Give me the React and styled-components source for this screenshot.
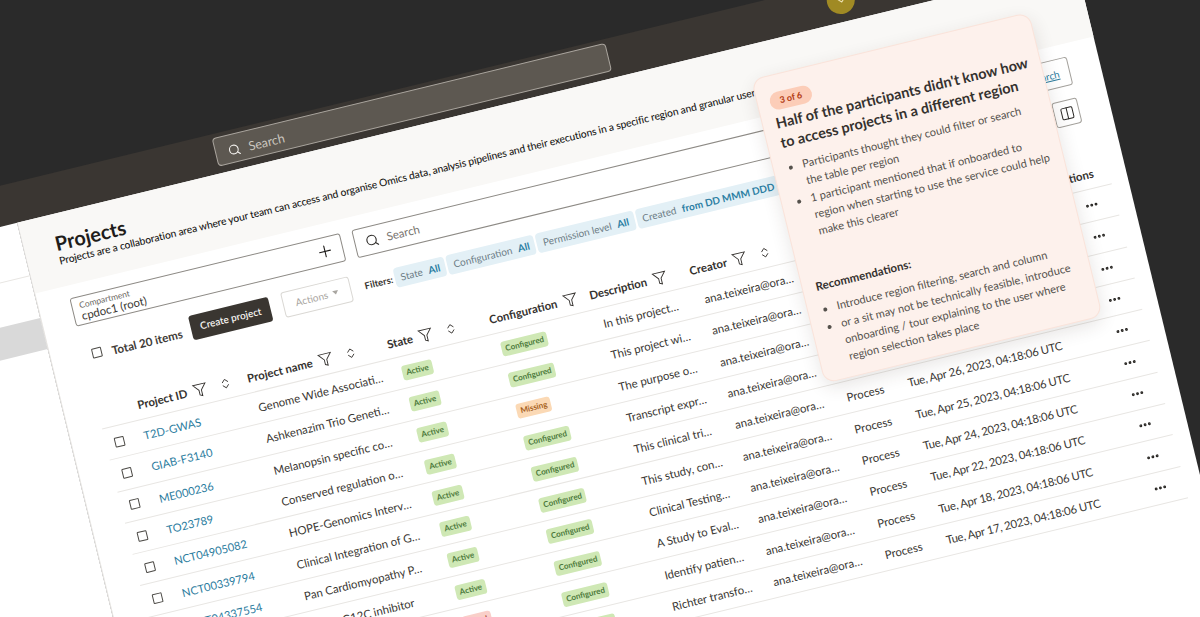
import React from 'react';
import styled, { createGlobalStyle } from 'styled-components';
import { Search, Plus, ChevronsUpDown, ChevronDown, Columns2, MoreHorizontal } from 'lucide-react';

const GlobalStyle = createGlobalStyle`
  html, body { margin: 0; padding: 0; background: #2a2a2a; overflow: hidden; }
  * { box-sizing: border-box; }
`;

const Stage = styled.div`
  width: 1200px;
  height: 617px;
  overflow: hidden;
  background: #2a2a2a;
  font-family: 'Lato', 'Noto Sans', sans-serif;
  color: #3a3733;
`;

// the whole screen is tilted, everything inside flows normally
const Device = styled.div`
  width: 1355px;
  height: 900px;
  transform-origin: 0 0;
  transform: rotate(-13.65deg) translate(-301px, 180.5px);
  display: flex;
  flex-direction: column;
`;

const TopBar = styled.div`
  height: 40px;
  flex: none;
  background: #3a3632;
  padding: 4px 0 0 474px;
  display: flex;
  align-items: flex-start;
`;

const TopSearch = styled.div`
  width: 405px;
  height: 29px;
  background: #5d5851;
  border: 1px solid #aaa59e;
  border-radius: 4px;
  display: flex;
  align-items: center;
  gap: 8px;
  padding: 3px 0 0 12px;
  color: #cbc6bf;
  font-size: 12.5px;
  svg { color: #f4f2ef; }
`;

const Avatar = styled.div`
  width: 28px;
  height: 28px;
  margin-left: 225px;
  border-radius: 50%;
  background: #a08a24;
  color: #eee3b4;
  display: flex;
  align-items: center;
  justify-content: center;
`;

const UserName = styled.span`
  margin: 7px 0 0 6px;
  color: #fff;
  font-size: 11px;
`;

const Body = styled.div`
  flex: 1;
  display: flex;
  min-height: 0;
`;

const Sidebar = styled.nav`
  width: 265px;
  flex: none;
  background: #fff;
  padding-top: 54px;
`;

const NavLine = styled.div`
  height: 1px;
  background: #e8e6e3;
  margin-bottom: 43px;
`;

const NavItem = styled.div`
  height: 32px;
  background: #d9d9d9;
`;

const Main = styled.main`
  position: relative;
  width: 1090px;
  flex: none;
  background: #fff;
  border-left: 1px solid #e6e4e1;
`;

const PageHead = styled.header`
  height: 73px;
  background: #f9f8f6;
  padding: 17px 0 0 31px;
  white-space: nowrap;
  overflow: hidden;
`;

const Title = styled.h1`
  margin: 0;
  font-size: 20px;
  line-height: 24px;
  font-weight: 700;
  color: #1f1d1b;
`;

const Subtitle = styled.p`
  margin: -1px 0 0;
  font-size: 10.35px;
  letter-spacing: -0.12px;
  line-height: 15px;
  font-weight: 500;
  color: #1a1917;
`;

const Toolbar = styled.div`
  display: grid;
  grid-template-columns: 278px 1fr;
  column-gap: 12px;
  row-gap: 15px;
  padding: 13px 31px 0 32px;
`;

const Field = styled.div`
  height: 29px;
  border: 1px solid #8d8a85;
  border-radius: 3px;
  background: #fff;
  display: flex;
  align-items: center;
  position: relative;
`;

const CompartmentField = styled(Field)`
  padding: 0 8px 0 7px;
  justify-content: space-between;
`;

const FieldText = styled.div`
  display: flex;
  flex-direction: column;
  font-size: 11.4px;
  line-height: 12px;
`;

const FieldLabel = styled.span`
  font-size: 8.5px;
  line-height: 10px;
  color: #6b6863;
`;

const SearchRow = styled.div`
  display: flex;
  gap: 8px;
`;

const SearchField = styled(Field)`
  flex: 1;
  gap: 8px;
  padding-left: 10px;
  color: #77736e;
  font-size: 11.4px;
  svg { color: #2f2d2a; }
`;

const OutlineButton = styled.button`
  height: 29px;
  padding: 0 10px;
  background: #fff;
  border: 1px solid #a3a09b;
  border-radius: 3px;
  font: inherit;
  font-size: 10px;
  color: #2b7c9e;
  text-decoration: underline;
`;

const ActionsRow = styled.div`
  display: flex;
  align-items: center;
  height: 26px;
  padding-left: 9px;
`;

const Checkbox = styled.span`
  display: block;
  flex: none;
  width: 10px;
  height: 10px;
  border: 1px solid #4b4945;
  border-radius: 1px;
`;

const SelectAll = styled(Checkbox)`
  margin-top: 3px;
`;

const Total = styled.span`
  margin: 6px 0 0 10px;
  width: 82px;
  font-size: 11.6px;
  font-weight: 700;
  white-space: nowrap;
  color: #3f3c38;
`;

const PrimaryButton = styled.button`
  width: 82px;
  height: 25px;
  border: 0;
  border-radius: 3px;
  background: #3a3631;
  color: #f5f3f0;
  font: inherit;
  font-size: 10px;
  font-weight: 600;
`;

const GhostButton = styled.button`
  width: 70px;
  height: 26px;
  margin-left: 13px;
  background: #fff;
  border: 1px solid #dad8d4;
  border-radius: 3px;
  font: inherit;
  font-size: 10px;
  color: #a9a6a1;
  display: flex;
  align-items: center;
  justify-content: center;
  gap: 5px;
`;

const Caret = styled.span`
  border-left: 3px solid transparent;
  border-right: 3px solid transparent;
  border-top: 4px solid #a9a6a1;
`;

const FilterRow = styled.div`
  display: flex;
  align-items: center;
  height: 26px;
  white-space: nowrap;
`;

const FilterLabel = styled.span`
  width: 31px;
  font-size: 9.5px;
  font-weight: 700;
`;

const Chip = styled.span`
  height: 20px;
  margin-right: 2px;
  padding: 0 6px;
  border-radius: 4px;
  background: #e3f0f6;
  display: flex;
  align-items: center;
  gap: 6px;
  font-size: 10px;
  color: #6d7d86;
  b { color: #2b7ea3; font-weight: 700; }
`;

const IconButton = styled.button`
  position: absolute;
  right: 31px;
  top: 128px;
  width: 26px;
  height: 26px;
  padding: 0;
  background: #fff;
  border: 1px solid #a3a09b;
  border-radius: 3px;
  color: #2b2926;
  display: flex;
  align-items: center;
  justify-content: center;
`;

const Table = styled.div`
  width: 1039px;
  margin: 32px 0 0 33px;
`;

const HeadRow = styled.div`
  display: grid;
  grid-template-columns: 40px 113px 144px 105px 103px 103px 123px 63px 191px 54px;
  height: 33px;
  padding-top: 3px;
  align-items: center;
  border-bottom: 1px solid #e8e6e3;
`;

const HeadCell = styled.div`
  display: flex;
  align-items: center;
  font-size: 11.4px;
  font-weight: 700;
  color: #35322f;
  white-space: nowrap;
`;

const Funnel = styled.svg`
  width: 15px;
  height: 15px;
  margin-left: 6px;
  fill: none;
  stroke: #35322f;
  stroke-width: 1.5;
  flex: none;
`;

const SortIcon = styled(ChevronsUpDown)`
  margin-left: 12px;
  flex: none;
`;

const Row = styled.div`
  display: grid;
  grid-template-columns: 39px 118px 148px 102px 105px 104px 115px 63px 208px 37px;
  height: 32.3px;
  align-items: center;
  border-bottom: 1px solid #e8e6e3;
  font-size: 11.4px;
  white-space: nowrap;
`;

const CheckCell = styled.div`
  padding-left: 9px;
`;

const IdLink = styled.a`
  color: #2b7c9e;
  font-size: 11.2px;
`;

const DateCell = styled.div`
  letter-spacing: -0.22px;
`;

const Badge = styled.span`
  display: inline-block;
  height: 15px;
  padding: 0 4px;
  border-radius: 3px;
  font-size: 8px;
  line-height: 15px;
  font-weight: 700;
  background: ${({ $tone }) => ({ good: '#cfe8b5', warn: '#fbd9b5', bad: '#f9cfc9' }[$tone])};
  color: ${({ $tone }) => ({ good: '#4d7a3c', warn: '#a65f1c', bad: '#a8392b' }[$tone])};
`;

const DotsCell = styled.div`
  display: flex;
  padding-left: 5px;
  color: #2b2926;
`;

const InsightCard = styled.aside`
  position: absolute;
  left: 746px;
  top: 34px;
  width: 286px;
  height: 313px;
  padding: 13px 10px 13px 12px;
  background: #fdf1ec;
  border: 1px solid #fae3da;
  border-radius: 12px;
  box-shadow: 0 6px 18px rgba(60, 40, 30, 0.12);
`;

const StepPill = styled.span`
  display: inline-block;
  height: 18px;
  padding: 0 10px;
  border-radius: 9px;
  background: #fccdb8;
  color: #b23a12;
  font-size: 9px;
  line-height: 18px;
  font-weight: 700;
`;

const CardTitle = styled.h2`
  margin: 3px 0 6px 1px;
  font-size: 14.5px;
  line-height: 20px;
  font-weight: 700;
  color: #35322f;
`;

const Bullets = styled.ul`
  margin: 0;
  padding: 0 0 0 17px;
  font-size: 11.1px;
  line-height: 17.3px;
  color: #55514c;
`;

const CardSub = styled.h3`
  margin: 38px 0 6px 1px;
  font-size: 11.5px;
  line-height: 16px;
  font-weight: 700;
  color: #35322f;
`;

const FilterIcon = () => (
  <Funnel viewBox="0 0 24 24">
    <polygon points="22 3 2 3 10 12.5 10 20 14 22 14 12.5 22 3" />
  </Funnel>
);

const columns = [
  ['', 0],
  ['Project ID', 1],
  ['Project name', 1],
  ['State', 1],
  ['Configuration', 0],
  ['Description', 0],
  ['Creator', 1],
  ['Type', 0],
  ['Created', 0],
];

const projects = [
  ['T2D-GWAS', 'Genome Wide Associati…', 'Active', 'Configured', 'In this project…', 'Tue, Apr 30, 2023, 04:18:06 UTC'],
  ['GIAB-F3140', 'Ashkenazim Trio Geneti…', 'Active', 'Configured', 'This project wi…', 'Tue, Apr 29, 2023, 04:18:06 UTC'],
  ['ME000236', 'Melanopsin specific co…', 'Active', 'Missing', 'The purpose o…', 'Tue, Apr 28, 2023, 04:18:06 UTC'],
  ['TO23789', 'Conserved regulation o…', 'Active', 'Configured', 'Transcript expr…', 'Tue, Apr 27, 2023, 04:18:06 UTC'],
  ['NCT04905082', 'HOPE-Genomics Interv…', 'Active', 'Configured', 'This clinical tri…', 'Tue, Apr 26, 2023, 04:18:06 UTC'],
  ['NCT00339794', 'Clinical Integration of G…', 'Active', 'Configured', 'This study, con…', 'Tue, Apr 25, 2023, 04:18:06 UTC'],
  ['NCT04337554', 'Pan Cardiomyopathy P…', 'Active', 'Configured', 'Clinical Testing…', 'Tue, Apr 24, 2023, 04:18:06 UTC'],
  ['NCT05132075', 'KRAS G12C inhibitor', 'Active', 'Configured', 'A Study to Eval…', 'Tue, Apr 22, 2023, 04:18:06 UTC'],
  ['NCT03892018', 'Lung Cancer Screening', 'Failed', 'Configured', 'Identify patien…', 'Tue, Apr 18, 2023, 04:18:06 UTC'],
  ['NCT02846623', 'Richter Syndrome', 'Failed', 'Configured', 'Richter transfo…', 'Tue, Apr 17, 2023, 04:18:06 UTC'],
];

const stateTone = { Active: 'good', Failed: 'bad' };
const configTone = { Configured: 'good', Missing: 'warn' };

export default function App() {
  return (
    <Stage>
      <GlobalStyle />
      <Device>
        <TopBar>
          <TopSearch>
            <Search size={13} strokeWidth={2} />
            Search
          </TopSearch>
          <Avatar>
            <ChevronDown size={13} />
          </Avatar>
          <UserName>Ana</UserName>
        </TopBar>
        <Body>
          <Sidebar>
            <NavLine />
            <NavItem />
          </Sidebar>
          <Main>
            <PageHead>
              <Title>Projects</Title>
              <Subtitle>
                Projects are a collaboration area where your team can access and organise Omics data, analysis pipelines and their executions in a specific region and granular user permissions
              </Subtitle>
            </PageHead>
            <Toolbar>
              <CompartmentField>
                <FieldText>
                  <FieldLabel>Compartment</FieldLabel>
                  cpdoc1 (root)
                </FieldText>
                <Plus size={19} strokeWidth={1.4} color="#1f1d1b" />
              </CompartmentField>
              <SearchRow>
                <SearchField>
                  <Search size={14} strokeWidth={2} />
                  Search
                </SearchField>
                <OutlineButton>Advanced search</OutlineButton>
              </SearchRow>
              <ActionsRow>
                <SelectAll />
                <Total>Total 20 items</Total>
                <PrimaryButton>Create project</PrimaryButton>
                <GhostButton>
                  Actions <Caret />
                </GhostButton>
              </ActionsRow>
              <FilterRow>
                <FilterLabel>Filters:</FilterLabel>
                <Chip>State <b>All</b></Chip>
                <Chip>Configuration <b>All</b></Chip>
                <Chip>Permission level <b>All</b></Chip>
                <Chip>Created <b>from DD MMM DDD - from DD MMM DDD</b></Chip>
              </FilterRow>
            </Toolbar>
            <IconButton>
              <Columns2 size={15} strokeWidth={1.6} />
            </IconButton>
            <Table>
              <HeadRow>
                {columns.map(([label, sortable], i) => (
                  <HeadCell key={i}>
                    {label}
                    {label && <FilterIcon />}
                    {sortable ? <SortIcon size={13} strokeWidth={1.6} /> : null}
                  </HeadCell>
                ))}
                <HeadCell>Actions</HeadCell>
              </HeadRow>
              {projects.map(([id, name, state, config, desc, date]) => (
                <Row key={id}>
                  <CheckCell><Checkbox /></CheckCell>
                  <IdLink>{id}</IdLink>
                  <div>{name}</div>
                  <div><Badge $tone={stateTone[state]}>{state}</Badge></div>
                  <div><Badge $tone={configTone[config]}>{config}</Badge></div>
                  <div>{desc}</div>
                  <div>ana.teixeira@ora…</div>
                  <div>Process</div>
                  <DateCell>{date}</DateCell>
                  <DotsCell><MoreHorizontal size={15} strokeWidth={2.6} /></DotsCell>
                </Row>
              ))}
            </Table>
            <InsightCard>
              <StepPill>3 of 6</StepPill>
              <CardTitle>Half of the participants didn't know how to access projects in a different region</CardTitle>
              <Bullets>
                <li>Participants thought they could filter or search<br />the table per region</li>
                <li>1 participant mentioned that if onboarded to region when starting to use the service could help make this clearer</li>
              </Bullets>
              <CardSub>Recommendations:</CardSub>
              <Bullets>
                <li>Introduce region filtering, search and column</li>
                <li>or a sit may not be technically feasible, introduce onboarding / tour explaining to the user where region selection takes place</li>
              </Bullets>
            </InsightCard>
          </Main>
        </Body>
      </Device>
    </Stage>
  );
}
